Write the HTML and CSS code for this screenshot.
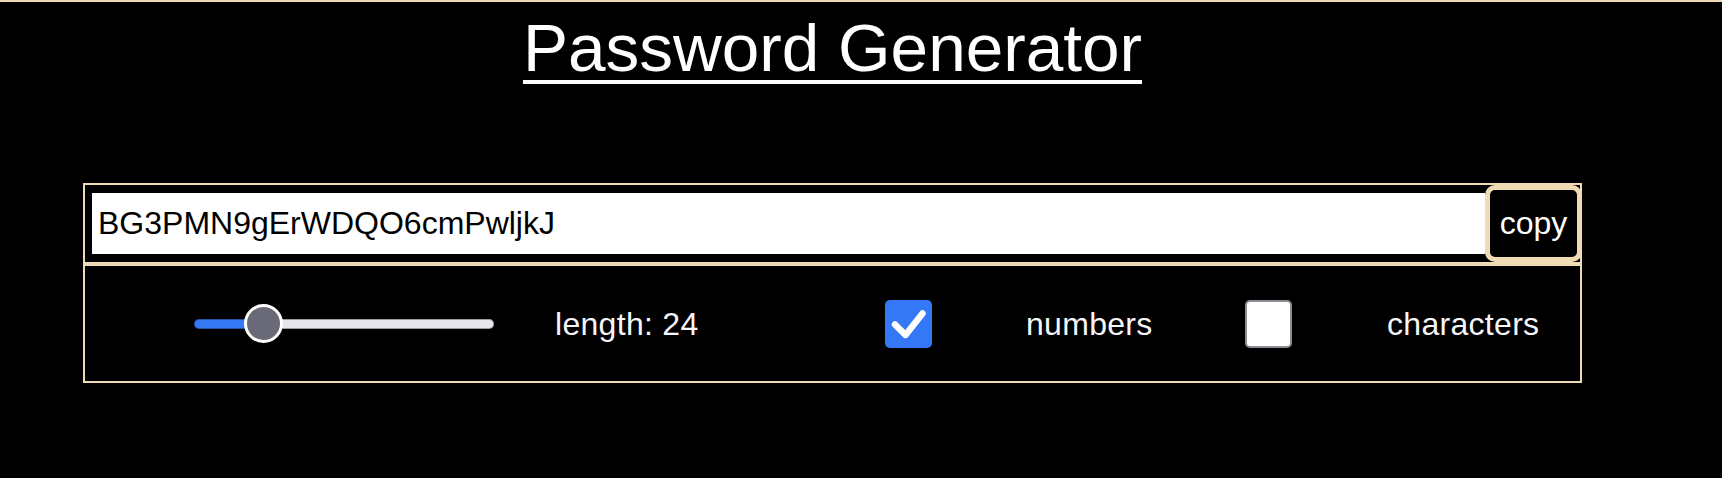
FILE: index.html
```html
<!DOCTYPE html>
<html lang="en">
<head>
<meta charset="utf-8">
<title>Password Generator</title>
<link rel="stylesheet" href="styles.css">
</head>
<body>
<main class="app">
  <h1 class="title">Password Generator</h1>
  <section class="generator">
    <div class="output-row">
      <input class="password" type="text" value="BG3PMN9gErWDQO6cmPwljkJ" readonly>
      <button class="copy-btn" type="button">copy</button>
    </div>
    <div class="options-row">
      <input class="slider" type="range" min="5" max="105" value="24">
      <span class="opt-label length-label">length: 24</span>
      <span class="checkbox checked" role="checkbox" aria-checked="true">
        <svg viewBox="0 0 47 47" width="47" height="47"><polyline points="10,24.5 20.5,35 37.5,13.5" fill="none" stroke="#fff" stroke-width="6.5" stroke-linecap="round" stroke-linejoin="round"/></svg>
      </span>
      <span class="opt-label numbers-label">numbers</span>
      <span class="checkbox" role="checkbox" aria-checked="false"></span>
      <span class="opt-label chars-label">characters</span>
    </div>
  </section>
</main>
</body>
</html>
```
FILE: styles.css
```css
html, body {
  background: #000;
}
body {
  margin: 0;
  border-top: 2px solid #f0dcb4;
  font-family: "Liberation Sans", Arial, sans-serif;
  color: #fff;
}
.app {
  width: 1499px;
  margin-left: 83px;
}
.title {
  margin: 7px 0 0;
  font-size: 67.5px;
  font-weight: 400;
  line-height: 77px;
  text-align: center;
  color: #fff;
  text-decoration: underline;
  text-decoration-thickness: 4px;
  text-underline-offset: 9px;
}
.generator {
  margin-top: 97px;
}
.output-row {
  display: flex;
  align-items: center;
  height: 77px;
  border: 2px solid #f0dcb4;
  padding-left: 7px;
}
.password {
  flex: 1;
  min-width: 0;
  height: 61px;
  margin: 0;
  border: none;
  outline: none;
  padding: 0 0 0 6px;
  background: #fff;
  color: #000;
  font-family: "Liberation Sans", Arial, sans-serif;
  font-size: 32px;
  box-sizing: border-box;
}
.copy-btn {
  width: 97px;
  height: 77px;
  margin: 0 -2px 0 0;
  padding: 0;
  border: 5px solid #f0dcb4;
  border-radius: 10px;
  background: #000;
  color: #fff;
  font-family: "Liberation Sans", Arial, sans-serif;
  font-size: 32px;
  box-sizing: border-box;
  position: relative;
}
.options-row {
  display: flex;
  align-items: center;
  height: 115px;
  border: 2px solid #f0dcb4;
  border-top-width: 2px;
  padding-left: 109px;
}
.slider {
  -webkit-appearance: none;
  appearance: none;
  width: 300px;
  height: 10px;
  margin: 0;
  border-radius: 5px;
  background: linear-gradient(to right, #3478f6 0 70px, #e7e6eb 70px);
  box-shadow: inset 0 0 0 1px rgba(0, 0, 0, 0.32);
}
.slider::-webkit-slider-thumb {
  -webkit-appearance: none;
  appearance: none;
  width: 39px;
  height: 39px;
  border-radius: 50%;
  background: #6a6977;
  border: 3px solid #fff;
  box-sizing: border-box;
}
.opt-label {
  font-size: 32px;
  letter-spacing: 0.3px;
  color: #f6f6fa;
  line-height: 1;
}
.length-label {
  margin-left: 61px;
  width: 330px;
}
.numbers-label {
  margin-left: 94px;
  width: 219px;
}
.chars-label {
  margin-left: 95px;
}
.checkbox {
  display: block;
  width: 47px;
  height: 48px;
  border-radius: 5px;
  background: #fff;
  border: 2px solid #8e8c96;
  box-sizing: border-box;
}
.checkbox.checked {
  background: #3478f6;
  border: none;
}
.checkbox svg {
  display: block;
}
```
